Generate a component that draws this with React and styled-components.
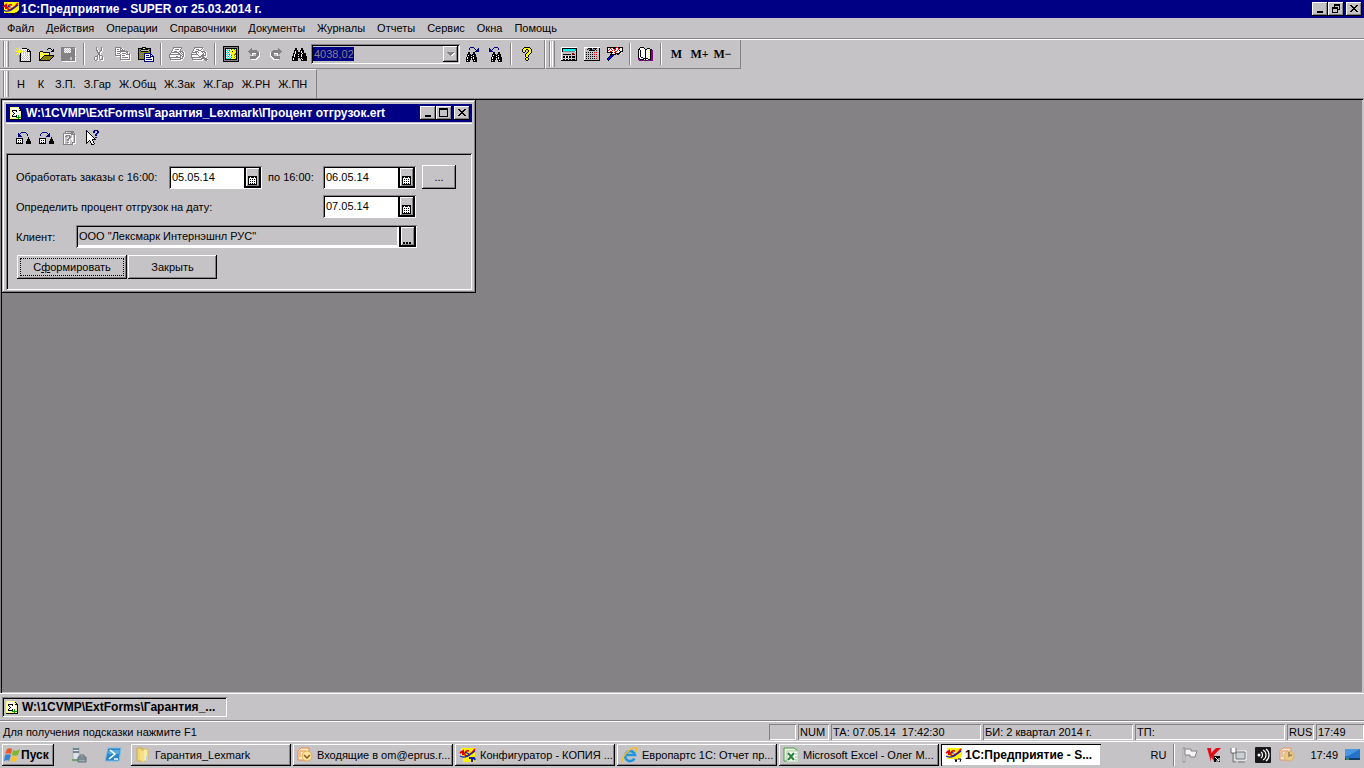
import React, {useState} from "react";
import styled, {createGlobalStyle, css} from "styled-components";

const GlobalStyle = createGlobalStyle`
    * {
        box-sizing: border-box;
    }

    body {
        margin: 0;
        background-color: #C6C3C6;
    }

    body, button, input {
        font-family: "Liberation Sans", Arial, sans-serif;
        font-size: 11px;
        color: #000;
    }

    svg {
        flex-shrink: 0;
    }
`

const raised = css`
    background-color: #C6C3C6;
    border: none;
    box-shadow: inset -1px -1px #000, inset 1px 1px #FFF, inset -2px -2px #848284;
`

const sunken = css`
    box-shadow: inset 1px 1px #848284, inset -1px -1px #FFF, inset 2px 2px #000;
`

const Tela = styled.div`
    min-height: 100vh;
    display: flex;
    flex-direction: column;
    background-color: #C6C3C6;
    white-space: nowrap;
    cursor: default;
`

const TitleBar = styled.header`
    display: flex;
    align-items: center;
    height: 18px;
    padding: 0 2px;
    gap: 2px;
    background-color: #000084;
    color: #FFF;
    font-weight: bold;
`

const ChildTitleBar = styled(TitleBar)`
    padding: 0 2px 0 4px;
    gap: 4px;
`

const Titulo = styled.h1`
    flex: 1;
    margin: 0;
    font-size: 12px;
    line-height: 16px;
`

const WindowButtons = styled.div`
    display: flex;

    button:last-child {
        margin-left: 2px;
    }
`

const WindowButton = styled.button`
    ${raised}
    display: flex;
    justify-content: center;
    align-items: center;
    width: 16px;
    height: 14px;
    padding: 0 1px 1px 0;
`

const MenuBar = styled.nav`
    display: flex;
    height: 21px;
    padding: 0 1px;
    border-bottom: 1px solid #848284;
`

const MenuItem = styled.button`
    background: none;
    border: none;
    padding: 0 6px;
    text-align: left;
`

const Bars = styled.div`
    display: flex;
    flex-direction: column;
    align-items: flex-start;
    border-top: 1px solid #FFF;
    border-bottom: 1px solid #848284;
`

const BarRow = styled.div`
    display: flex;
    height: 29px;
`

const ToolBar = styled.div`
    display: flex;
    align-items: center;
    padding: 0 6px 0 2px;
    border-right: 1px solid #848284;
    border-bottom: 1px solid #848284;

    & + & {
        border-left: 1px solid #FFF;
    }
`

const QuickBar = styled(ToolBar)`
    padding-right: 5px;
    border-top: 1px solid #FFF;
    border-bottom: none;
`

const Grip = styled.span`
    width: 6px;
    height: 26px;
    margin: 0 2px 0 1px;
    border: solid #848284;
    border-width: 0 1px;
    box-shadow: inset 1px 0 #FFF, inset -1px 0 #C6C3C6, inset -2px 0 #FFF;
`

const ToolButton = styled.button`
    display: flex;
    justify-content: center;
    align-items: center;
    width: 23px;
    height: 22px;
    padding: 0;
    background: none;
    border: none;
`

const MemoryButton = styled(ToolButton)`
    font-family: "Liberation Serif", serif;
    font-size: 12px;
    font-weight: bold;
`

const Separator = styled.span`
    width: 2px;
    height: 22px;
    margin: 0 3px;
    border-left: 1px solid #848284;
    border-right: 1px solid #FFF;
`

const Combo = styled.div`
    ${sunken}
    display: flex;
    justify-content: space-between;
    align-items: center;
    width: 149px;
    height: 20px;
    padding: 2px;
    margin-right: 1px;
`

const ComboInput = styled.input`
    width: 41px;
    height: 14px;
    padding: 0 1px;
    border: none;
    background-color: #000084;
    color: #848284;
`

const ComboArrow = styled.button`
    ${raised}
    display: flex;
    justify-content: center;
    align-items: center;
    width: 15px;
    height: 16px;
    padding: 0;
`

const QuickButton = styled.button`
    background: none;
    border: none;
    padding: 0 4px;
    min-width: 20px;
`

const Mdi = styled.main`
    flex: 1;
    padding: 1px 2px;
    margin-right: 1px;
    background-color: #848284;
    box-shadow: inset 1px 0 #848284, inset 0 1px #000, inset 2px 0 #000, inset -1px -1px #C6C3C6;
`

const Janela = styled.section`
    width: 474px;
    padding: 4px 4px 3px;
    background-color: #C6C3C6;
    box-shadow: inset -1px -1px #000, inset 1px 1px #C6C3C6, inset -2px -2px #848284, inset 2px 2px #FFF;
`

const FormTools = styled.div`
    display: flex;
    align-items: center;
    height: 30px;
    margin-top: 1px;
    padding: 0 0 2px 6px;
    border-top: 1px solid #FFF;
`

const Form = styled.form`
    display: flex;
    flex-direction: column;
    gap: 7px;
    padding: 12px 10px 11px 10px;
    ${sunken}
`

const FormRow = styled.div`
    display: grid;
    grid-template-columns: ${props => props.$columns};
    align-items: center;
    height: 23px;
`

const MiddleLabel = styled.label`
    padding-left: 6px;
`

const Field = styled.div`
    ${sunken}
    display: flex;
    height: 23px;
    padding: 2px 1px 1px 2px;
    background-color: ${props => props.$grey ? "#C6C3C6" : "#FFF"};
`

const FieldInput = styled.input`
    flex: 1;
    min-width: 0;
    padding: 0 1px 2px;
    border: none;
    outline: none;
    background: none;
    box-shadow: ${props => props.$grey ? "inset -2px -2px #FFF" : "none"};
`

const FieldButton = styled.button`
    display: flex;
    justify-content: center;
    align-items: flex-end;
    width: 17px;
    padding: 0 1px 3px 0;
    border: none;
    background-color: #C6C3C6;
    box-shadow: inset -2px -2px #000, inset 2px 0 #000, inset 3px 1px #FFF, inset -3px -3px #848284;
`

const Botao = styled.button`
    ${raised}
    width: ${props => props.$width}px;
    height: 24px;
    padding: 0;
    outline: ${props => props.$focused ? "1px dotted #000" : "none"};
    outline-offset: -4px;
`

const ButtonRow = styled.div`
    display: flex;
    gap: 1px;
    padding-left: 1px;
`

const PeriodButton = styled(Botao)`
    margin-left: 6px;
`

const DocumentBar = styled.div`
    display: flex;
    height: 28px;
    padding: 3px 2px;
    border-top: 1px solid #FFF;
    border-bottom: 1px solid #848284;
`

const DocumentTab = styled.button`
    ${sunken}
    display: flex;
    align-items: center;
    gap: 4px;
    width: 225px;
    height: 20px;
    padding: 0 4px;
    border: none;
    background-color: #C6C3C6;
    font-size: 12px;
    font-weight: bold;
`

const StatusBar = styled.footer`
    display: flex;
    gap: 2px;
    height: 20px;
    padding: 2px 0 1px 3px;
    line-height: 16px;
    border-top: 1px solid #FFF;
`

const StatusHint = styled.span`
    flex: 1;
`

const StatusPane = styled.span`
    width: ${props => props.$width}px;
    padding-left: 2px;
    white-space: pre;
    box-shadow: inset 1px 1px #848284, inset -1px -1px #FFF;
`

const TaskBar = styled.footer`
    display: flex;
    align-items: center;
    height: 27px;
    padding: 0 4px 0 2px;
    border-top: 1px solid #FFF;
`

const StartButton = styled.button`
    ${raised}
    display: flex;
    align-items: center;
    gap: 1px;
    width: 52px;
    height: 22px;
    padding: 0 2px;
    font-size: 12px;
    font-weight: bold;
`

const QuickLaunch = styled.div`
    display: flex;
    justify-content: space-between;
    width: 77px;
    padding: 0 9px 0 17px;
`

const Tasks = styled.div`
    display: flex;
    flex: 1;
    gap: 2px;
`

const TaskButton = styled.button`
    ${raised}
    display: flex;
    align-items: center;
    gap: 4px;
    width: 160px;
    height: 22px;
    padding: 0 4px;
    overflow: hidden;
    ${props => props.$active && css`
        background-color: #FFF;
        font-weight: bold;
        font-size: 12px;
        gap: 3px;
        box-shadow: inset 1px 1px #000, inset -1px -1px #C6C3C6;
    `}
`

const Tray = styled.div`
    display: flex;
    align-items: center;
    gap: 8px;
    height: 22px;
    margin-left: 7px;
    padding-left: 8px;
    border-left: 1px solid #848284;
    box-shadow: inset 1px 0 #FFF;
`

const Relogio = styled.time`
    margin: 0 -1px 0 7px;
`

const colors = {
    k: "#000", g: "#848284", w: "#FFF", l: "#C6C3C6", y: "#FFFF00", o: "#848200",
    b: "#000084", B: "#0000FF", c: "#00FFFF", t: "#008284", r: "#FF0000", d: "#840000",
    m: "#840084", n: "#FFFF84", G: "#00A000",
}

const sprites = {
    novo: [
        "....y...........",
        ".y..y..kkkkk....",
        "..y.y.ywwwwwkk..",
        "y..yyyywlwlwkwk.",
        ".yyynyyyylwlkkkk",
        "...yyy.wlwlwlwlk",
        "..y.ykywlwlwlwlk",
        ".y..yklwywlwlwlk",
        "....gklwlwlwlwlk",
        "....gkwlwlwlwlwk",
        "....gklwlwlwlwlk",
        "....gkwlwlwlwlwk",
        "....gklwlwlwlwlk",
        "....gkwlwlwlwlwk",
        "....gkkkkkkkkkkk",
    ],
    abrir: [
        "..........kkk...",
        ".........k...k.k",
        "..............kk",
        "..kkk........kkk",
        ".kynykkkkkkk....",
        ".knynynynynk....",
        ".kynynynynyk....",
        ".knynykkkkkkkkkk",
        ".kynykoooooooook",
        ".knykoooooooook.",
        ".kykoooooooook..",
        ".kkoooooooook...",
        ".kkkkkkkkkkk....",
    ],
    salvar: [
        "gggggggggggggg.",
        "ggglwlwlwlgglgw",
        "gggwlwlwlwggggw",
        "ggglwlwlwlggggw",
        "gggwlwlwlwggggw",
        "ggglwlwlwlggggw",
        "ggggggggggggggw",
        "ggggggggggggggw",
        "ggggggggggggggw",
        "gggggggggggggg.",
        "gggggggggllgggw",
        "gggggggggllgggw",
        "gggggggggllgggw",
        "ggggggggggggggw",
        ".wwwwwwwwwwwwww",
    ],
    cortar: [
        "...g....g....",
        "...gw...gw...",
        "...gw...gw...",
        "...ggw.ggw...",
        "....gw.gw....",
        "....gggww....",
        ".....ggw.....",
        ".....ggw.....",
        "....gwggg....",
        "..gggwgwwg...",
        ".gwwgwgw.gw..",
        ".gw.gwgw.gw..",
        ".gw.gw.gggw..",
        "..ggww..www..",
    ],
    copiar: [
        "gggggg..........",
        "gwwwwggw........",
        "gwggwgwgw.......",
        "gwwwwggggg......",
        "gwggggggggggg...",
        "gwwwwgwwwwwggw..",
        "gwgggwwggggwgwg.",
        "gwwwwgwwwwwggggw",
        "ggggggwgggwwwwgw",
        ".wwwwgwwwwwwwwgw",
        ".....gwggggggwgw",
        ".....gwwwwwwwwgw",
        ".....ggggggggggw",
        "......wwwwwwwwww",
    ],
    colar: [
        "....kkkk........",
        "kkkkkyykkkkkk...",
        "kogkkkkkkkgok...",
        "kokllllllllkk...",
        "kogkkkkkkkogk...",
        "kgogogogogogk...",
        "kogogobbbbbbb...",
        "kgogogbwwwwwbb..",
        "kogogobwbbbwbwb.",
        "kgogogbwwwwwbbbb",
        "kogogobwbbbbbwwb",
        "kgogogbwwwwwwwwb",
        "kkkkkkbwbbbbbbwb",
        "......bwwwwwwwwb",
        "......bbbbbbbbbb",
    ],
    imprimir: [
        "....ggggggggg...",
        "....gwwwwwwwg...",
        "...gwwggggwg....",
        "...gwwwwwwwg....",
        "..gwwgggwwggggw.",
        "..ggggggggwgwggw",
        ".gwwwwwwwggwgwgw",
        "ggggggggggggwggw",
        "gwwwwwwwwwwggwgw",
        "gwwwwwwggwwgwggw",
        "ggggggggggggwgw.",
        ".gwwwwwwwwwgggw.",
        ".gggggggggggww..",
        "..wwwwwwwwwww...",
    ],
    visualizar: [
        "...ggggggggg....",
        "...gwwwwwwwgw...",
        "..gwwgggwwgw....",
        "..gwwwwgggww....",
        ".gwwgggwwwggggw.",
        ".gggggwgwwwgwggw",
        "gwwwwgwwwwwwgwgw",
        "gggggggwwwwggwgw",
        "gwwwwwwgwwgggggw",
        "gwwwwwwwgggggwww",
        "ggggggggggwgggw.",
        ".gwwwwwwwwggggggw",
        ".ggggggggggwwgggg",
        "..wwwwwwwwww..ggw",
    ],
    chave: [
        "kkkkkkkkkkkkkkkk",
        "kggggggggggggggk",
        "kgkkkkkkkkkkkkgk",
        "kgkwcwcwtyytwkgk",
        "kgkcwctwyyyyckgk",
        "kgkwcwcyykyyykgk",
        "kgkcwtwyyyyyykgk",
        "kgkwcwcwyyyytkgk",
        "kgkcwctwcyyotkgk",
        "kgkwcwcwtyyowkgk",
        "kgkcwtwcwyyyckgk",
        "kgkwcwcwtyyowkgk",
        "kgkcwcwtwyyyckgk",
        "kgkkkkkkkkkkkkgk",
        "kggggggggggggggk",
        "kkkkkkkkkkkkkkkk",
    ],
    desfazer: [
        "....g........",
        "...gg........",
        "..gggggggg...",
        ".gggggggggg..",
        "..ggggggggggw",
        "...ggwwwwgggw",
        "....gw...gggw",
        ".....w...gggw",
        "...ggggggggww",
        "...gggggggww.",
        "...ggggggww..",
        "....wwwwww...",
    ],
    binoculo: [
        "...kk....kk....",
        "...kk....kk....",
        "..kkkk..kkkk...",
        "..kwkk..kwkk...",
        "..kwkkkkkwkk...",
        ".kkwkkkkkkwkkk.",
        ".kwkkkwkkwkkkk.",
        ".kwkkkkkkwkkkk.",
        "kkwkkkwkkwkkkkk",
        "kkkkkkkkkkkkkkk",
        "kwkkkk..kwkkkkk",
        "kwkkkk...kwkkkk",
        "kkkkkk...kkkkkk",
    ],
    proximo: [
        "....bbbb.....",
        "...b....b...b",
        "...b.....b.bb",
        "..........bbb",
        ".........bbbb",
        "..kk...kk....",
        "..kk...kk....",
        ".kkkk.kkkk...",
        ".kwkkkkwkk...",
        ".kkkkwkkkk...",
        "kwkkkkkwkkk..",
        "kwkkkwkwkkk..",
        "kkkkk.kkkkk..",
        "kwkk...kwkk..",
        "kkkk...kkkk..",
    ],
    anterior: [
        ".....bbbb....",
        "b...b....b...",
        "bb.b.....b...",
        "bbb..........",
        "bbbb.........",
        "....kk...kk..",
        "....kk...kk..",
        "...kkkk.kkkk.",
        "...kwkkkkwkk.",
        "...kkkkwkkkk.",
        "..kwkkkkkwkkk",
        "..kwkkkwkwkkk",
        "..kkkkk.kkkkk",
        "..kwkk...kwkk",
        "..kkkk...kkkk",
    ],
    ajuda: [
        "..kkkkkk..",
        ".kyyyyyyk.",
        "kyyykkyyyk",
        "kyyk..kyyk",
        "kyyk..kyyk",
        ".kk..kyyyk",
        "....kyyyk.",
        "...kyyyk..",
        "...kyyk...",
        "...kyyk...",
        "....kk....",
        "...kyyk...",
        "...kyyk...",
        "....kk....",
    ],
    calculadora: [
        "wwwwwwwwwwwwwwww",
        "wkkkkkkkkkkkkkkk",
        "wkccccccccccccgk",
        "wkccccccccccccgk",
        "wkggggggggggggwk",
        "wllllllllllllllk",
        "wllllllllllddllk",
        "wlkkkkkkkkldddlk",
        "wllllllllllllllk",
        "wlkkwkkwkklkkklk",
        "wlkkwkkwkklkkklk",
        "wllllllllllllllk",
        "wlkkwkkwkklkkklk",
        "kkkkkkkkkkkkkkkk",
    ],
    tabela: [
        "wwwwwwwwwwwwwwww",
        "wlllkkkklkkkkllk",
        "wllkggkkgggklllk",
        "wllllkkkkkklkllk",
        "wllllllllllllllk",
        "wlklklklklrlrllk",
        "wllllllllllllllk",
        "wlklklklklrlrllk",
        "wllllllllllllllk",
        "wlklklklklklrllk",
        "wllllllllllllllk",
        "wlklklklklklrllk",
        "wllllllllllllllk",
        "kkkkkkkkkkkkkkkk",
    ],
    formula: [
        "kkkkkkkkkrrkkkkk",
        "kwwrwwkkrwwrkwwk",
        "kwrwrwwrkwwrwwwk",
        "krwwwrwrwwrwkwwk",
        "kwwrrwwwrrwwwkkk",
        "kkkkkkwrkwwwkkw.",
        "....kwwwkkkkkw..",
        "...kkkkkk.kk....",
        "...kBBk.........",
        "..kBBk..........",
        ".kBBk...........",
        "kBBk............",
        "kBk.............",
        ".k..............",
    ],
    livro: [
        "..kkkk..........",
        ".kwwwwk..kkk....",
        "kkwwwwwkkwwwkk..",
        "kwkwwwwkwwnykmm.",
        "kwkwwwwkwnwwkmm.",
        "kwkwwwwkwwnykmm.",
        "kwkwwwwkwnwwkmm.",
        "kwkwwwwkwwnykmm.",
        "kwkwwwwkwnwwkmm.",
        "kwkwwwwkwwnykmm.",
        "kwwkkwwkwnwwkmm.",
        "mkwwwkkkkkwykmm.",
        "mmkkkkwkwwkkkmm.",
        ".mmmmmmkkmmmmmm.",
    ],
    planilha: [
        ".....bbbbb.....",
        "..b.b.....b....",
        "..bb.......b...",
        "..bbb......b...",
        "..bbbb.........",
        "............k..",
        "kkkkkkk.....k..",
        "kwwwwwk....kkk.",
        "kwkwkwk....kkk.",
        "kwwwwwk...kkkkk",
        "kwkwkwk...kkkkk",
        "kkkkkkk...kkkkk",
    ],
    planilhaSalvar: [
        "...bbbbb.......",
        "..b.....b.b....",
        ".b.......bb....",
        ".b......bbb....",
        ".......bbbb....",
        "............k..",
        "kkkkkkk.....k..",
        "kwwwwwk....kkk.",
        "kwkwkwk....kkk.",
        "kwwwwwk...kkkkk",
        "kwkwkwk...kkkkk",
        "kkkkkkk...kkkkk",
    ],
    descricao: [
        "..ggggggggg..",
        "..gwllllggg..",
        "gggggggggglg.",
        "gwwwwwwwgggg.",
        "gwlggggllwlgw",
        "gwggllgglwlgw",
        "gwlllwgglwlgw",
        "gwllwgglwwlgw",
        "gwllggwlwwlgw",
        "gwllggwllwlgw",
        "gwlllwwllwlgw",
        "gwllggwllgggw",
        "gwlllwwllgwww",
        "ggggggggggw..",
    ],
    cursor: [
        "k.......bbbb..",
        "kk.....bb..bb.",
        "kwk....bb..bb.",
        "kwwk......bb..",
        "kwwwk....bb...",
        "kwwwwk...bb...",
        "kwwwwwk.......",
        "kwwwwwwk.bb...",
        "kwwwwwwwk.....",
        "kwwwwwkkkk....",
        "kwwkwwk.......",
        "kwk.kwwk......",
        "kk..kwwk......",
        "k....kwwk.....",
        ".....kkk......",
    ],
    soma: [
        "nnnnnnnnn...",
        "nwwwwwwwnk..",
        "nwwwwwwwnwk.",
        "nwkkkkkwnkkk",
        "nwkwwwkwwwnk",
        "nwwkwwwwwwnk",
        "nwwwkwwwwwnk",
        "nwwkwwwwwwnk",
        "nwkwwwkwGwnk",
        "nwkkkkkwGwnk",
        "nwwwwwGGGGGk",
        "nnnnnnnnGnnk",
        "kkkkkkkkkkkk",
    ],
    calendario: [
        "kkkkkkkkk",
        "kkwkkkwkk",
        "kwwwwwwwk",
        "kwkwkwkwk",
        "kwwwwwwwk",
        "kwkwkwkwk",
        "kwwwwwwwk",
        "kwkwkwkwk",
        "kkkkkkkkk",
    ],
    pontos: [
        "kk.kk.kk",
        "kk.kk.kk",
    ],
    seta: [
        "ggggggg.",
        ".gggggww",
        "..gggww.",
        "...gww..",
    ],
    minimizar: ["........", "........", "........", "........", "........", "........", ".kkkkkk.", ".kkkkkk."],
    maximizar: ["kkkkkkkkk", "kkkkkkkkk", "k.......k", "k.......k", "k.......k", "k.......k", "k.......k", "k.......k", "kkkkkkkkk"],
    restaurar: ["..kkkkkk", "..kkkkkk", "..k....k", "kkkkkk.k", "kkkkkk.k", "k....kkk", "k....k..", "k....k..", "kkkkkk.."],
    fechar: ["kk....kk", ".kk..kk.", "..kkkk..", "...kk...", "..kkkk..", ".kk..kk.", "kk....kk"],
}

sprites.refazer = sprites.desfazer.map(row => [...row].reverse().join(""))

function Sprite({name}) {
    const rows = sprites[name]
    const width = Math.max(...rows.map(row => row.length))
    return (
        <svg width={width} height={rows.length} shapeRendering="crispEdges" aria-hidden="true">
            {rows.map((row, y) => [...row].map((char, x) =>
                colors[char] ? <rect key={`${x}-${y}`} x={x} y={y} width="1" height="1" fill={colors[char]}/> : null
            ))}
        </svg>
    )
}

function Logo() {
    return (
        <svg width="17" height="16" viewBox="0 0 17 16" aria-hidden="true">
            <path d="M2 1h15v8l-3 3H2z" fill="#FFF200"/>
            <path d="M1 6l3-2v4" fill="none" stroke="#E00000" strokeWidth="2"/>
            <path d="M10 4C7 3 5 6 6 8s6 0 10-6" fill="none" stroke="#E00000" strokeWidth="1.6"/>
            <path d="M1 9c5 3 10-1 15-5M6 5l4 2" fill="none" stroke="#1020C0" strokeWidth="1.2"/>
            <path d="M8 6l3-1-2 2z" fill="#FFF"/>
            <path d="M10 12l1 3 1-3M13 12h3l-1 3" fill="none" stroke="#000"/>
        </svg>
    )
}

function ConfigLogo() {
    return (
        <svg width="17" height="16" viewBox="0 0 17 16" aria-hidden="true">
            <path d="M2 1h14v14H4V9H2z" fill="#FFF200"/>
            <path d="M1 6l3-2v4" fill="none" stroke="#E00000" strokeWidth="2"/>
            <path d="M10 4C7 3 5 6 6 8s6 0 10-6" fill="none" stroke="#E00000" strokeWidth="1.6"/>
            <path d="M1 9c5 3 10-1 15-5M6 5l4 2" fill="none" stroke="#1020C0" strokeWidth="1.2"/>
            <path d="M10 11h5l1 2M13 10v5" fill="none" stroke="#1020A0" strokeWidth="2"/>
        </svg>
    )
}

function WindowsFlag() {
    return (
        <svg width="16" height="16" viewBox="0 0 16 16" aria-hidden="true">
            <path d="M3 2c2-1 4-1 5 0L7 7c-2-1-4-1-6 0z" fill="#E8592B"/>
            <path d="M9 3c2 1 4 1 7-1l-2 6c-2 1-4 1-6 0z" fill="#7DB82E"/>
            <path d="M1 8c2-1 4-1 6 0l-2 6c-1-1-3-1-5 0z" fill="#3A82D0"/>
            <path d="M8 9c2 1 4 1 6 0l-2 5c-2 1-4 1-6 0z" fill="#FBC22D"/>
        </svg>
    )
}

function ServerIcon() {
    return (
        <svg width="16" height="16" viewBox="0 0 16 16" aria-hidden="true">
            <path d="M2 0h6v14H2z" fill="#DDE5EA" stroke="#A4B2BA"/>
            <path d="M2 2h6M2 5h6" stroke="#53656F" strokeWidth="1.5"/>
            <path d="M1 13h7" stroke="#6DA868" strokeWidth="2"/>
            <path d="M7 10h8v5H7z" fill="#9CA9B1" stroke="#5E6E78"/>
            <path d="M9 10V8h4v2M7 12h8" fill="none" stroke="#5E6E78"/>
        </svg>
    )
}

function PowerShellIcon() {
    return (
        <svg width="17" height="16" viewBox="0 0 17 16" aria-hidden="true">
            <path d="M3 1h13l-2 13H0z" fill="#2B87C8" stroke="#80BFE4"/>
            <path d="M4 3h11l-1 4H3z" fill="#5AABDD"/>
            <path d="M5 3l5 4-6 5M9 12h4" fill="none" stroke="#FFF" strokeWidth="1.6"/>
        </svg>
    )
}

function FolderIcon() {
    return (
        <svg width="16" height="16" viewBox="0 0 16 16" aria-hidden="true">
            <path d="M2 1h5l1 13H2z" fill="#F2D675" stroke="#D2AC45"/>
            <path d="M8 2h5v11l-5 2z" fill="#FBEBA5" stroke="#D7B659"/>
            <path d="M5 3l4 1v11l-4-2z" fill="#F8DF85"/>
            <path d="M11 9h2v5h-2z" fill="#B8D5E8"/>
        </svg>
    )
}

function OutlookIcon({faded}) {
    return (
        <svg width="16" height="16" viewBox="0 0 16 16" opacity={faded ? 0.7 : 1} aria-hidden="true">
            <path d="M1 4l3-3h8v4L9 13H1z" fill="#FFF3DF" stroke="#E8843A"/>
            <path d="M3 10V4h6" fill="none" stroke="#E8843A"/>
            <circle cx="10" cy="9" r="5" fill={faded ? "#F8CF67" : "#FCE3A0"} stroke="#E7A745"/>
            <path d={faded ? "M10 5v4l3-1" : "M7 8l3 3 3-3"} fill="none" stroke="#875A26" strokeWidth="1.5"/>
        </svg>
    )
}

function ExplorerIcon() {
    return (
        <svg width="17" height="16" viewBox="0 0 17 16" aria-hidden="true">
            <path d="M13.500 11.500A5 5 0 1 1 14 8H5" fill="none" stroke="#2196DF" strokeWidth="2.6"/>
            <path d="M2 15C-2 12 10-1 15 1c1 1 1 2 0 4" fill="none" stroke="#F2BC32" strokeWidth="1.5"/>
        </svg>
    )
}

function ExcelIcon() {
    return (
        <svg width="16" height="16" viewBox="0 0 16 16" aria-hidden="true">
            <path d="M1 1h10l3 2v11H1z" fill="#E8F3E3" stroke="#4E9A46"/>
            <path d="M4 4h11v11H4z" fill="#FFF" stroke="#A9C9A4"/>
            <path d="M5 6l6 7M11 6l-6 7" stroke="#27843A" strokeWidth="2"/>
            <path d="M12 7h2M12 10h2M12 13h2" stroke="#88B780"/>
        </svg>
    )
}

function TrayIcons() {
    return (
        <>
            <svg width="16" height="16" viewBox="0 0 16 16" aria-hidden="true">
                <path d="M2 1v14" stroke="#FFF" strokeWidth="3"/>
                <path d="M1 1v14h2V1z" fill="#FFF" stroke="#848284"/>
                <path d="M3 2h6v2h6l-2 6H8V8H3z" fill="#F4F4F4" stroke="#848284"/>
            </svg>
            <svg width="16" height="16" viewBox="0 0 16 16" aria-hidden="true">
                <path d="M1 1h4v5l5-5h5L8 8l4 6H8L5 10v5z" fill="#E40D16"/>
                <path d="M8 9h6v6H8z" fill="#000"/>
                <path d="M9 10l4 4v-3M13 14h-3" fill="none" stroke="#FFF"/>
            </svg>
            <svg width="17" height="16" viewBox="0 0 17 16" aria-hidden="true">
                <path d="M5 4h11v9H5z" fill="#C8D0D4" stroke="#FFF"/>
                <path d="M6 5h9v7H6zM3 6v9h3M8 15h7" fill="none" stroke="#777"/>
                <path d="M1 1v5h5V1" fill="#FFF" stroke="#666"/>
            </svg>
            <svg width="16" height="16" viewBox="0 0 16 16" aria-hidden="true">
                <rect width="16" height="16" rx="1" fill="#181818"/>
                <circle cx="4" cy="8" r="1.5" fill="#FFF"/>
                <path d="M6 5c2 1 2 5 0 6M8 3c4 2 4 8 0 10M11 2c4 3 4 9 0 12" fill="none" stroke="#FFF" strokeWidth="1.2"/>
            </svg>
            <OutlookIcon faded/>
        </>
    )
}

function DesktopIcon() {
    return (
        <svg width="15" height="14" viewBox="0 0 15 14" aria-hidden="true">
            <path d="M0 1h15v10H0z" fill="#2473C8"/>
            <path d="M0 1h15L3 8H0z" fill="#4998DF"/>
            <path d="M0 10h15v2H0z" fill="#153B69"/>
            <path d="M1 11h3" stroke="#6BCB67"/>
        </svg>
    )
}

const menus = ["Файл", "Действия", "Операции", "Справочники", "Документы", "Журналы", "Отчеты", "Сервис", "Окна", "Помощь"]

const atalhos = ["Н", "К", "З.П.", "З.Гар", "Ж.Общ", "Ж.Зак", "Ж.Гар", "Ж.РН", "Ж.ПН"]

const tarefas = [
    {nome: "Гарантия_Lexmark", icone: <FolderIcon/>},
    {nome: "Входящие в om@eprus.r...", icone: <OutlookIcon/>},
    {nome: "Конфигуратор - КОПИЯ ...", icone: <ConfigLogo/>},
    {nome: "Европартс 1С: Отчет пр...", icone: <ExplorerIcon/>},
    {nome: "Microsoft Excel - Олег М...", icone: <ExcelIcon/>},
    {nome: "1С:Предприятие - S...", icone: <Logo/>},
]

function Tools({names}) {
    return names.map((name, i) => name === "|"
        ? <Separator key={i}/>
        : <ToolButton key={i} type="button" aria-label={name}><Sprite name={name}/></ToolButton>
    )
}

function Controls({names}) {
    return (
        <WindowButtons>
            {names.map(name => <WindowButton key={name} type="button" aria-label={name}><Sprite name={name}/></WindowButton>)}
        </WindowButtons>
    )
}

function DateField({id, inicial}) {
    const [data, setData] = useState(inicial)
    return (
        <Field>
            <FieldInput id={id} value={data} onChange={evento => setData(evento.target.value)}/>
            <FieldButton type="button" aria-label="Календарь"><Sprite name="calendario"/></FieldButton>
        </Field>
    )
}

function App() {
    const [busca, setBusca] = useState("4038,02")
    const [ativa, setAtiva] = useState(5)

    return (
        <Tela>
            <GlobalStyle/>
            <TitleBar>
                <Logo/>
                <Titulo>1С:Предприятие - SUPER от 25.03.2014 г.</Titulo>
                <Controls names={["minimizar", "restaurar", "fechar"]}/>
            </TitleBar>
            <MenuBar>
                {menus.map(menu => <MenuItem key={menu} type="button">{menu}</MenuItem>)}
            </MenuBar>
            <Bars>
                <BarRow>
                    <ToolBar>
                        <Grip/>
                        <Tools names={["novo", "abrir", "salvar", "|", "cortar", "copiar", "colar", "|", "imprimir", "visualizar", "|", "chave", "desfazer", "refazer", "binoculo"]}/>
                        <Combo>
                            <ComboInput aria-label="Поиск" value={busca} onChange={evento => setBusca(evento.target.value)}/>
                            <ComboArrow type="button" aria-label="Список"><Sprite name="seta"/></ComboArrow>
                        </Combo>
                        <Tools names={["proximo", "anterior", "|", "ajuda"]}/>
                    </ToolBar>
                    <ToolBar>
                        <Grip/>
                        <Tools names={["calculadora", "tabela", "formula", "|", "livro", "|"]}/>
                        {["M", "M+", "M−"].map(nome => <MemoryButton key={nome} type="button">{nome}</MemoryButton>)}
                    </ToolBar>
                </BarRow>
                <BarRow>
                    <QuickBar>
                        <Grip/>
                        {atalhos.map(atalho => <QuickButton key={atalho} type="button">{atalho}</QuickButton>)}
                    </QuickBar>
                </BarRow>
            </Bars>
            <Mdi>
                <Janela>
                    <ChildTitleBar>
                        <Sprite name="soma"/>
                        <Titulo as="h2">W:\1CVMP\ExtForms\Гарантия_Lexmark\Процент отгрузок.ert</Titulo>
                        <Controls names={["minimizar", "maximizar", "fechar"]}/>
                    </ChildTitleBar>
                    <FormTools>
                        <Tools names={["planilha", "planilhaSalvar", "descricao", "cursor"]}/>
                    </FormTools>
                    <Form onSubmit={evento => evento.preventDefault()}>
                        <FormRow $columns="153px 93px 61px 93px 40px">
                            <label htmlFor="inicio">Обработать заказы с 16:00:</label>
                            <DateField id="inicio" inicial="05.05.14"/>
                            <MiddleLabel htmlFor="fim">по 16:00:</MiddleLabel>
                            <DateField id="fim" inicial="06.05.14"/>
                            <PeriodButton type="button" $width={34}>...</PeriodButton>
                        </FormRow>
                        <FormRow $columns="307px 93px">
                            <label htmlFor="data">Определить процент отгрузок на дату:</label>
                            <DateField id="data" inicial="07.05.14"/>
                        </FormRow>
                        <FormRow $columns="60px 341px">
                            <label htmlFor="cliente">Клиент:</label>
                            <Field $grey>
                                <FieldInput id="cliente" $grey readOnly value={'ООО "Лексмарк Интернэшнл РУС"'}/>
                                <FieldButton type="button" aria-label="Выбрать"><Sprite name="pontos"/></FieldButton>
                            </Field>
                        </FormRow>
                        <ButtonRow>
                            <Botao type="submit" $width={110} $focused>С<u>ф</u>ормировать</Botao>
                            <Botao type="button" $width={89}>Закрыть</Botao>
                        </ButtonRow>
                    </Form>
                </Janela>
            </Mdi>
            <DocumentBar>
                <DocumentTab type="button">
                    <Sprite name="soma"/>
                    W:\1CVMP\ExtForms\Гарантия_...
                </DocumentTab>
            </DocumentBar>
            <StatusBar>
                <StatusHint>Для получения подсказки нажмите F1</StatusHint>
                <StatusPane $width={27}/>
                <StatusPane $width={31}>NUM</StatusPane>
                <StatusPane $width={150}>ТА: 07.05.14  17:42:30</StatusPane>
                <StatusPane $width={150}>БИ: 2 квартал 2014 г.</StatusPane>
                <StatusPane $width={150}>ТП:</StatusPane>
                <StatusPane $width={27}>RUS</StatusPane>
                <StatusPane $width={48}>17:49</StatusPane>
            </StatusBar>
            <TaskBar>
                <StartButton type="button"><WindowsFlag/>Пуск</StartButton>
                <QuickLaunch>
                    <ServerIcon/>
                    <PowerShellIcon/>
                </QuickLaunch>
                <Tasks>
                    {tarefas.map((tarefa, i) => (
                        <TaskButton key={tarefa.nome} type="button" $active={i === ativa} onClick={() => setAtiva(i)}>
                            {tarefa.icone}
                            {tarefa.nome}
                        </TaskButton>
                    ))}
                </Tasks>
                <span>RU</span>
                <Tray>
                    <TrayIcons/>
                    <Relogio>17:49</Relogio>
                    <DesktopIcon/>
                </Tray>
            </TaskBar>
        </Tela>
    )
}

export default App
